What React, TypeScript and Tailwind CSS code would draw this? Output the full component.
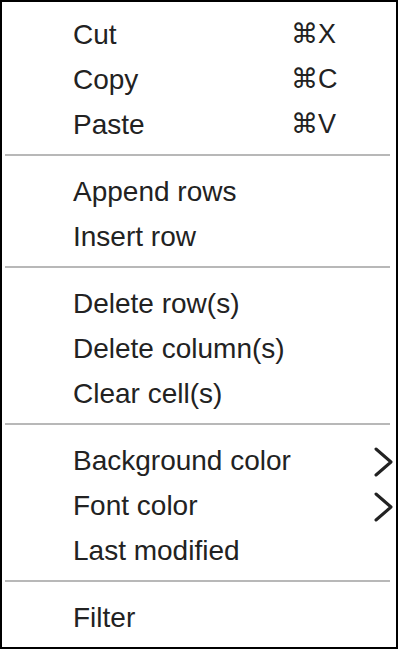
import React from 'react'

type Item = {
  label: string
  shortcut?: string
  submenu?: boolean
}

const groups: Item[][] = [
  [
    { label: 'Cut', shortcut: '⌘X' },
    { label: 'Copy', shortcut: '⌘C' },
    { label: 'Paste', shortcut: '⌘V' }
  ],
  [{ label: 'Append rows' }, { label: 'Insert row' }],
  [{ label: 'Delete row(s)' }, { label: 'Delete column(s)' }, { label: 'Clear cell(s)' }],
  [
    { label: 'Background color', submenu: true },
    { label: 'Font color', submenu: true },
    { label: 'Last modified' }
  ],
  [{ label: 'Filter' }]
]

function Chevron() {
  return (
    <svg width="20" height="32" viewBox="0 0 20 32" className="ml-auto mr-[3px] mt-[3px]">
      <polyline
        points="3,3 18,16 3,29"
        fill="none"
        stroke="#222222"
        strokeWidth="3"
        strokeLinecap="round"
        strokeLinejoin="round"
      />
    </svg>
  )
}

function MenuRow({ item }: { item: Item }) {
  return (
    <div className="flex h-[45px] items-center pl-[71px] leading-[45px]">
      <span className={item.shortcut ? 'w-[218px] shrink-0' : ''}>{item.label}</span>
      {item.shortcut && (
        <span className="font-['Liberation_Sans','DejaVu_Sans',sans-serif] text-[27px]">{item.shortcut}</span>
      )}
      {item.submenu && <Chevron />}
    </div>
  )
}

export default function App() {
  return (
    <div className="h-[650px] w-[400px] bg-white">
      <div className="flex h-[649px] w-[398px] flex-col border-2 border-black bg-white pt-[10px] font-['Liberation_Sans',sans-serif] text-[28px] text-[#222222]">
        {groups.map((group, gi) => (
          <div key={gi}>
            {gi > 0 && <div className="mb-[13px] ml-[3px] mr-[6px] mt-[7px] h-[2px] bg-[#b8b8b8]" />}
            {group.map((item) => (
              <MenuRow key={item.label} item={item} />
            ))}
          </div>
        ))}
      </div>
    </div>
  )
}
